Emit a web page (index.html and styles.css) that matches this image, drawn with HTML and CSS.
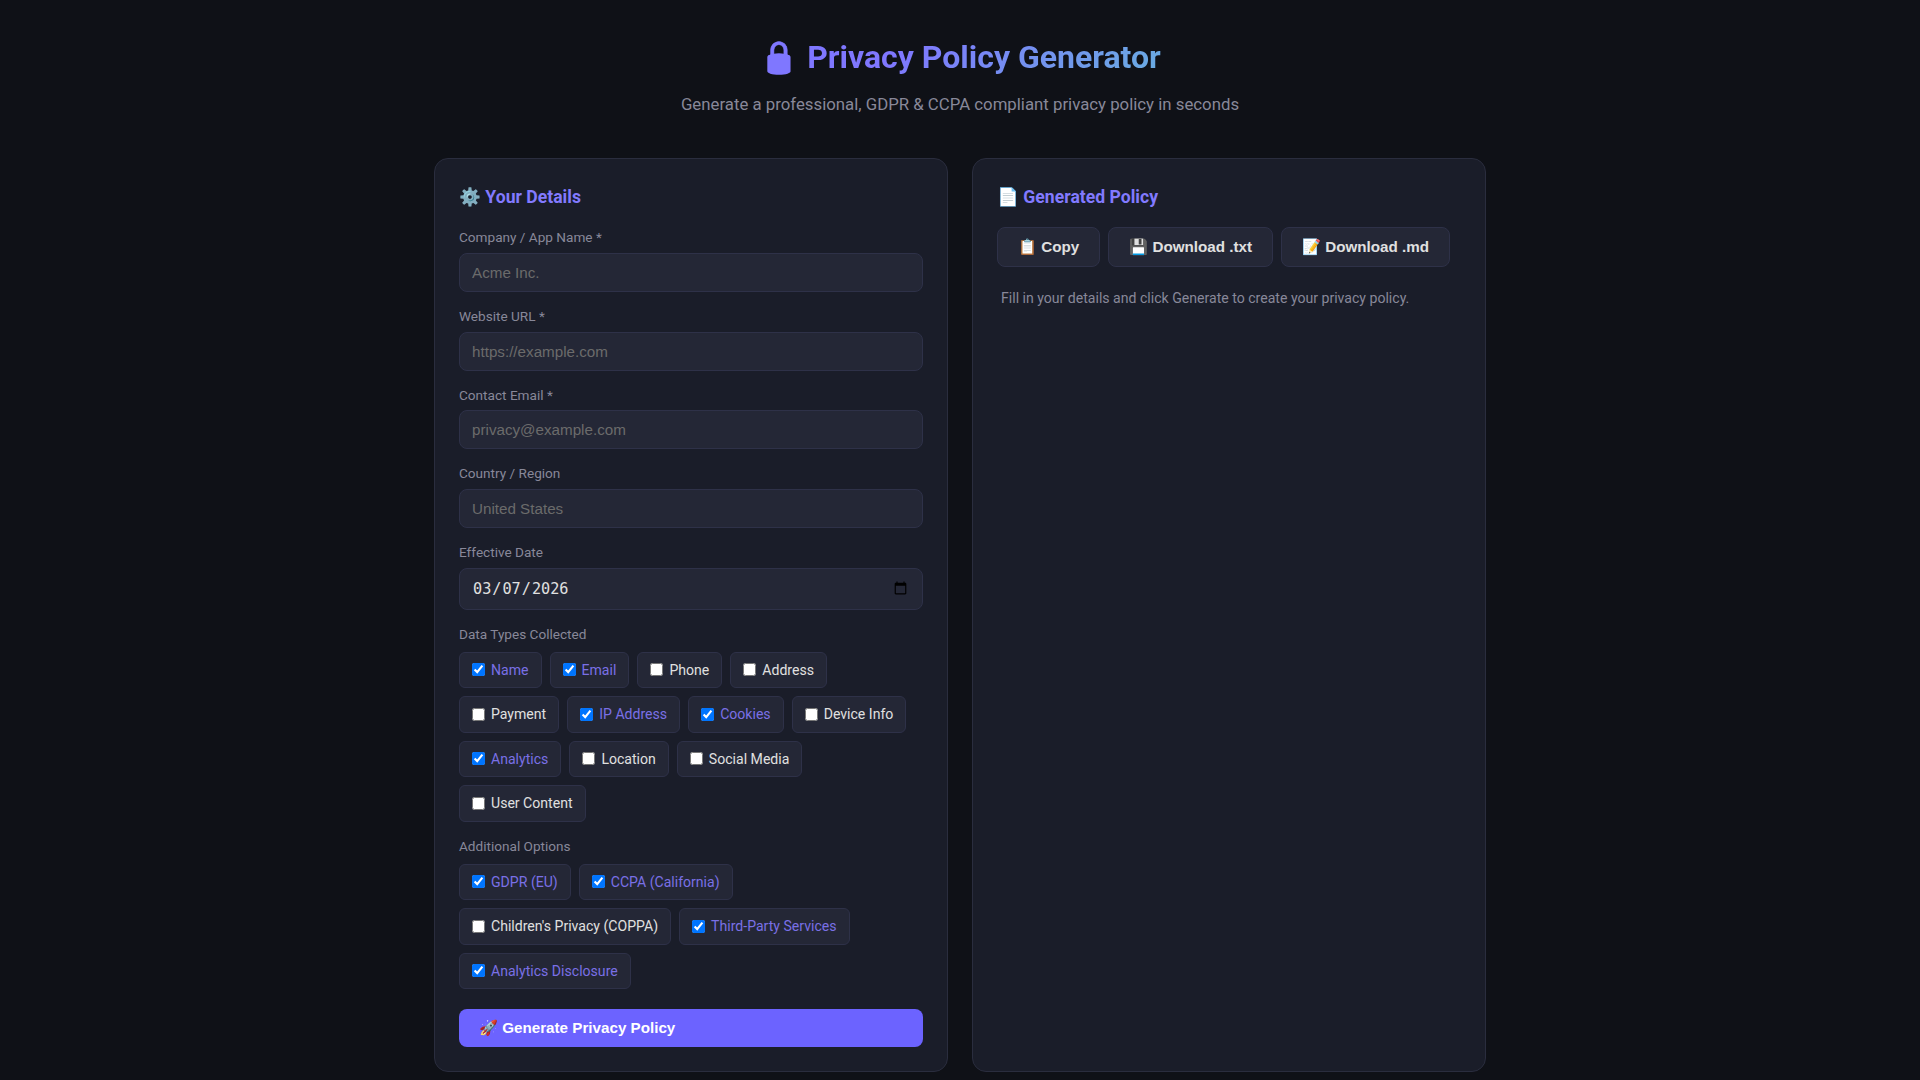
FILE: index.html
```html
<!DOCTYPE html>
<html lang="en">
<head>
  <meta charset="UTF-8" />
  <meta name="viewport" content="width=device-width, initial-scale=1.0" />
  <title>Privacy Policy Generator</title>
  <link rel="stylesheet" href="styles.css">
</head>
<body>
  <header class="header">
    <h1>🔒 Privacy Policy Generator</h1>
    <p>Generate a professional, GDPR &amp; CCPA compliant privacy policy in seconds</p>
  </header>

  <main class="container">
    <section class="panel">
      <h2>⚙️ Your Details</h2>

      <div class="field">
        <label for="company">Company / App Name *</label>
        <input type="text" id="company" placeholder="Acme Inc.">
      </div>
      <div class="field">
        <label for="website">Website URL *</label>
        <input type="text" id="website" placeholder="https://example.com">
      </div>
      <div class="field">
        <label for="email">Contact Email *</label>
        <input type="text" id="email" placeholder="privacy@example.com">
      </div>
      <div class="field">
        <label for="country">Country / Region</label>
        <input type="text" id="country" placeholder="United States">
      </div>
      <div class="field">
        <label for="date">Effective Date</label>
        <input type="date" id="date" value="2026-03-07">
      </div>

      <div class="field">
        <label>Data Types Collected</label>
        <div class="chips">
          <label class="chip on"><input type="checkbox" checked>Name</label>
          <label class="chip on"><input type="checkbox" checked>Email</label>
          <label class="chip"><input type="checkbox">Phone</label>
          <label class="chip"><input type="checkbox">Address</label>
          <label class="chip"><input type="checkbox">Payment</label>
          <label class="chip on"><input type="checkbox" checked>IP Address</label>
          <label class="chip on"><input type="checkbox" checked>Cookies</label>
          <label class="chip"><input type="checkbox">Device Info</label>
          <label class="chip on"><input type="checkbox" checked>Analytics</label>
          <label class="chip"><input type="checkbox">Location</label>
          <label class="chip"><input type="checkbox">Social Media</label>
          <label class="chip"><input type="checkbox">User Content</label>
        </div>
      </div>

      <div class="field">
        <label>Additional Options</label>
        <div class="chips">
          <label class="chip on"><input type="checkbox" checked>GDPR (EU)</label>
          <label class="chip on"><input type="checkbox" checked>CCPA (California)</label>
          <label class="chip"><input type="checkbox">Children's Privacy (COPPA)</label>
          <label class="chip on"><input type="checkbox" checked>Third-Party Services</label>
          <label class="chip on"><input type="checkbox" checked>Analytics Disclosure</label>
        </div>
      </div>

      <button class="generate">🚀 Generate Privacy Policy</button>
    </section>

    <section class="panel">
      <h2>📄 Generated Policy</h2>
      <div class="actions">
        <button>📋 Copy</button>
        <button>💾 Download .txt</button>
        <button>📝 Download .md</button>
      </div>
      <p class="hint">Fill in your details and click Generate to create your privacy policy.</p>
    </section>
  </main>
</body>
</html>
```

FILE: styles.css
```css
* {
  box-sizing: border-box;
  margin: 0;
  padding: 0;
}

body {
  font-family: Roboto, sans-serif;
  background: #0f1117;
  color: #e0e0e0;
  line-height: 1.6;
  min-height: 100vh;
}

.header {
  text-align: center;
  padding: 32px 24px 24px;
}

.header h1 {
  display: inline-block;
  font-size: 32px;
  font-weight: 700;
  line-height: 1.6;
  background: linear-gradient(135deg, #7f77ff 35%, #68aee0);
  -webkit-background-clip: text;
  background-clip: text;
  -webkit-text-fill-color: transparent;
}

.header p {
  color: #888899;
  font-size: 16.8px;
  margin-top: 8px;
}

.container {
  display: grid;
  grid-template-columns: 1fr 1fr;
  gap: 24px;
  max-width: 1100px;
  margin: 0 auto;
  padding: 16px 24px 8px;
}

.panel {
  background: #1a1d29;
  border: 1px solid #2a2d3e;
  border-radius: 14px;
  padding: 24px;
}

.panel h2 {
  font-size: 17.6px;
  font-weight: 700;
  color: #827aff;
  margin-bottom: 16px;
}

.field {
  margin-bottom: 14px;
}

.field > label {
  display: block;
  font-size: 13.6px;
  color: #888899;
  margin-bottom: 4px;
}

.field > input {
  width: 100%;
  padding: 10px 12px;
  background: #242736;
  border: 1px solid #2e3148;
  border-radius: 8px;
  color: #e0e0e0;
  font-size: 15.2px;
}

.field > input::placeholder {
  color: #6b6b6b;
}

.chips {
  display: flex;
  flex-wrap: wrap;
  gap: 8px;
  margin-top: 6px;
  margin-bottom: 14px;
}

.chip {
  display: flex;
  align-items: center;
  gap: 6px;
  background: #242736;
  border: 1px solid #2e3148;
  border-radius: 6px;
  padding: 6px 12px;
  font-size: 14.08px;
  color: #e0e0e0;
}

.chip input {
  margin: 0;
  width: 13px;
  height: 13px;
}

.chip.on {
  color: #7a70e6;
}

.generate {
  display: block;
  width: 100%;
  padding: 10px 20px;
  margin-top: 20px;
  background: #6c63ff;
  color: #fff;
  border: none;
  border-radius: 8px;
  font-size: 15.2px;
  font-weight: 700;
  text-align: left;
}

.actions {
  display: flex;
  gap: 8px;
  margin-bottom: 20px;
}

.actions button {
  padding: 10px 20px;
  background: #242736;
  color: #e0e0e0;
  border: 1px solid #2e3148;
  border-radius: 8px;
  font-size: 15.2px;
  font-weight: 700;
}

.hint {
  color: #888899;
  font-size: 14.08px;
  padding: 0 4px;
}
```
